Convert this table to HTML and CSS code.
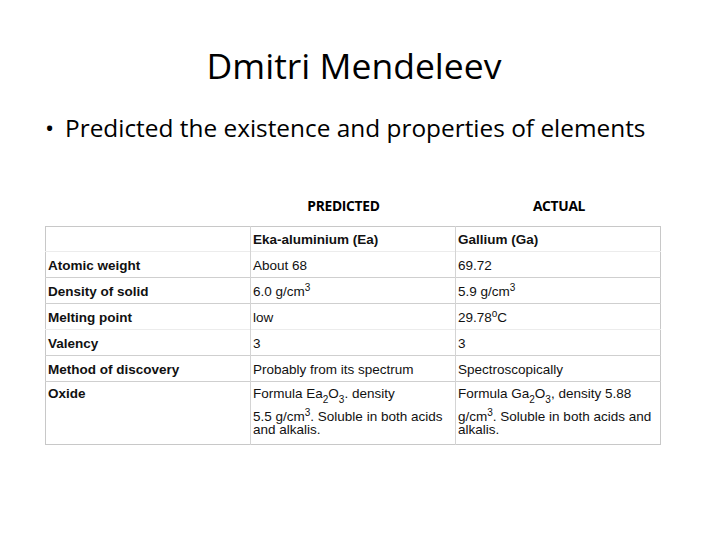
FILE: index.html
```html
<!DOCTYPE html>
<html>
<head>
<meta charset="utf-8">
<link rel="stylesheet" href="styles.css">
</head>
<body>
<div class="slide">
  <h1 class="title">Dmitri Mendeleev</h1>
  <ul class="bullets">
    <li>Predicted the existence and properties of elements</li>
  </ul>
  <div class="labels">
    <div></div>
    <div class="lbl lbl-pred">PREDICTED</div>
    <div class="lbl lbl-act">ACTUAL</div>
  </div>
  <table class="cmp">
    <tr class="head">
      <td></td>
      <td class="b">Eka-aluminium (Ea)</td>
      <td class="b">Gallium (Ga)</td>
    </tr>
    <tr class="light">
      <td class="b">Atomic weight</td>
      <td>About 68</td>
      <td>69.72</td>
    </tr>
    <tr>
      <td class="b">Density of solid</td>
      <td>6.0 g/cm<sup>3</sup></td>
      <td>5.9 g/cm<sup>3</sup></td>
    </tr>
    <tr>
      <td class="b">Melting point</td>
      <td>low</td>
      <td>29.78<sup>o</sup>C</td>
    </tr>
    <tr class="light">
      <td class="b">Valency</td>
      <td>3</td>
      <td>3</td>
    </tr>
    <tr>
      <td class="b">Method of discovery</td>
      <td>Probably from its spectrum</td>
      <td>Spectroscopically</td>
    </tr>
    <tr class="oxide">
      <td class="b">Oxide</td>
      <td>Formula Ea<sub>2</sub>O<sub>3</sub>. density<br>5.5 g/cm<sup>3</sup>. Soluble in both acids and alkalis.</td>
      <td>Formula Ga<sub>2</sub>O<sub>3</sub>, density 5.88 g/cm<sup>3</sup>. Soluble in both acids and alkalis.</td>
    </tr>
  </table>
</div>
</body>
</html>
```

FILE: styles.css
```css
html, body {
  margin: 0;
  padding: 0;
  background: #ffffff;
}
.slide {
  width: 720px;
  height: 540px;
  overflow: hidden;
  background: #ffffff;
  color: #000000;
  font-family: "Open Sans", "Liberation Sans", sans-serif;
}
.title {
  margin: 0;
  padding-top: 42px;
  padding-right: 12px;
  text-align: center;
  font-weight: 400;
  font-size: 35.5px;
  line-height: 46px;
  letter-spacing: 0;
}
.bullets {
  margin: 0;
  padding: 0;
  list-style: none;
  margin-top: 24px;
}
.bullets li {
  position: relative;
  padding-left: 65px;
  font-size: 24.4px;
  line-height: 32px;
  letter-spacing: 0;
}
.bullets li::before {
  content: "•";
  position: absolute;
  left: 45px;
  top: 0;
}
.labels {
  display: grid;
  grid-template-columns: 204px 205px 204px;
  margin-left: 45px;
  margin-top: 52px;
  height: 20px;
}
.lbl {
  font-family: "Open Sans", "Liberation Sans", sans-serif;
  font-weight: 700;
  font-size: 13.8px;
  line-height: 20px;
  letter-spacing: -0.3px;
  text-align: center;
}
.lbl-pred { padding-right: 16px; }
.lbl-act { padding-left: 6px; }
.cmp {
  margin-left: 45px;
  margin-top: 10px;
  border-collapse: collapse;
  border: 1px solid #c8c8c8;
  font-family: "Liberation Sans", Arial, sans-serif;
  font-size: 13.5px;
  line-height: 15px;
  color: #111111;
  table-layout: fixed;
  width: 614px;
}
.cmp td {
  vertical-align: top;
  padding: 6px 3px 4px 2px;
  border-left: 1px solid #d4d4d4;
  border-top: 1px solid #cfcfcf;
  width: 199px;
}
.cmp td:first-child {
  border-left: none;
}
.cmp tr.head td {
  border-top: none;
  padding-top: 5px;
  padding-bottom: 4px;
}
.cmp tr.light td {
  border-top-color: #ececec;
}
.cmp .b {
  font-weight: 700;
}
.cmp sup, .cmp sub {
  font-size: 10px;
  line-height: 0;
}
.cmp tr.oxide td {
  line-height: 13px;
  padding-top: 5px;
  padding-bottom: 8px;
}
.cmp tr.oxide sub {
  line-height: 13px;
  vertical-align: -5px;
}
.cmp tr.oxide sup {
  line-height: 13px;
  vertical-align: 5px;
}
```
